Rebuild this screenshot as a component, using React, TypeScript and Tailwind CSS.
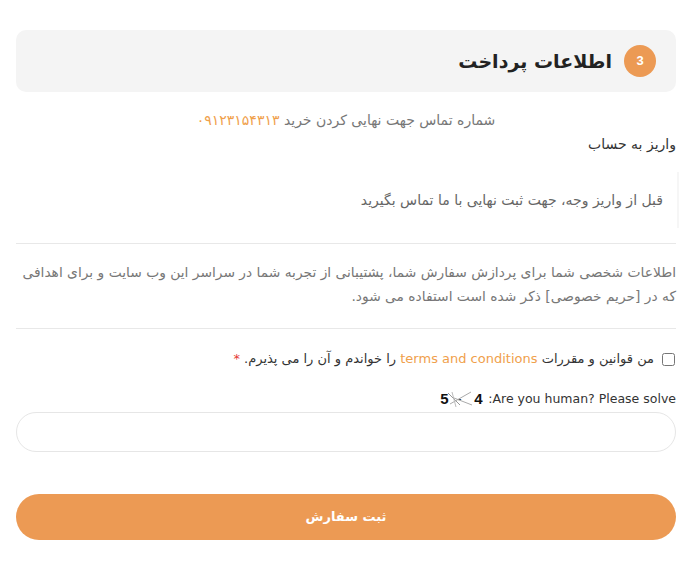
import React, { useState } from 'react';

const fa = { fontFamily: '"DejaVu Sans", "Noto Sans", sans-serif' };

const Captcha: React.FC = () => (
  <span dir="ltr" className="relative inline-flex items-center w-[48px] h-[20px] mx-1 align-middle">
    <span className="absolute left-[4px] top-0 text-[15px] font-bold text-[#111] leading-[20px] [font-family:'Liberation_Sans',sans-serif]">5</span>
    <span className="absolute left-[21px] top-0 text-[13px] text-[#333] leading-[20px] [font-family:'Liberation_Sans',sans-serif]">-</span>
    <span className="absolute left-[38px] top-0 text-[15px] font-bold text-[#111] leading-[20px] [font-family:'Liberation_Sans',sans-serif]">4</span>
    <svg className="absolute inset-0" width="48" height="20" viewBox="0 0 48 20">
      <line x1="12" y1="4" x2="24" y2="16" stroke="#999" strokeWidth="1" />
      <line x1="14" y1="15" x2="35" y2="3" stroke="#aaa" strokeWidth="1" />
      <line x1="18" y1="9" x2="36" y2="16" stroke="#aaa" strokeWidth="1" />
      <line x1="16" y1="3" x2="20" y2="18" stroke="#bbb" strokeWidth="1" />
    </svg>
  </span>
);

const App: React.FC = () => {
  const [agree, setAgree] = useState(false);
  const [answer, setAnswer] = useState('');

  return (
    <div dir="rtl" className="min-h-[570px] bg-white pl-4 pr-6 pt-[30px]" style={fa}>
      <div className="flex items-center gap-[12px] h-[62px] bg-[#f4f4f4] rounded-[10px] px-[20px]">
        <span className="w-[32px] h-[32px] rounded-full bg-[#ec9a54] text-white flex items-center justify-center text-[13px] font-bold [font-family:'Liberation_Sans',sans-serif]">
          3
        </span>
        <h2 className="text-[19px] font-bold text-[#222]">اطلاعات پرداخت</h2>
      </div>

      <p className="mt-[18px] text-center text-[14px] leading-[20px] text-[#777]">
        شماره تماس جهت نهایی کردن خرید <span className="text-[#f0a04b]">۰۹۱۲۳۱۵۴۳۱۳</span>
      </p>

      <p className="mt-[4px] text-[14px] leading-[20px] text-[#333]">واریز به حساب</p>

      <div className="mt-[18px] h-[56px] flex items-center pr-[14px] border-r-2 border-[#f6f6f6] mr-[-3px]">
        <p className="text-[14px] text-[#666]">قبل از واریز وجه، جهت ثبت نهایی با ما تماس بگیرید</p>
      </div>

      <hr className="mt-[15px] border-0 border-t border-[#e8e8e8]" />

      <p className="mt-[16px] text-[13.8px] leading-[24px] text-[#777]">
        اطلاعات شخصی شما برای پردازش سفارش شما، پشتیبانی از تجربه شما در سراسر این وب سایت و برای اهدافی که در [حریم خصوصی] ذکر شده است استفاده می شود.
      </p>

      <hr className="mt-[20px] border-0 border-t border-[#e8e8e8]" />

      <label className="mt-[20px] flex items-center gap-[8px] text-[13px] text-[#333] leading-[20px]">
        <input
          type="checkbox"
          checked={agree}
          onChange={(e) => setAgree(e.target.checked)}
          className="w-[13px] h-[13px] mr-[1px]"
        />
        <span>
          من قوانین و مقررات{' '}
          <a href="#" className="text-[#f0a04b]">terms and conditions</a> را خواندم و آن را می پذیرم.{' '}
          <span className="text-[#e53935]">*</span>
        </span>
      </label>

      <p className="mt-[20px] text-[12.5px] leading-[20px] text-[#333] flex items-center">
        <span>Are you human? Please solve:</span>
        <Captcha />
      </p>

      <input
        type="text"
        value={answer}
        onChange={(e) => setAnswer(e.target.value)}
        className="block mt-[3px] w-full h-[40px] rounded-full border border-[#e6e6e6] px-4 outline-none"
      />

      <button
        type="button"
        className="mt-[42px] w-full h-[46px] rounded-full bg-[#ec9a54] text-white text-[13px] font-bold"
      >
        ثبت سفارش
      </button>
    </div>
  );
};

export default App;
